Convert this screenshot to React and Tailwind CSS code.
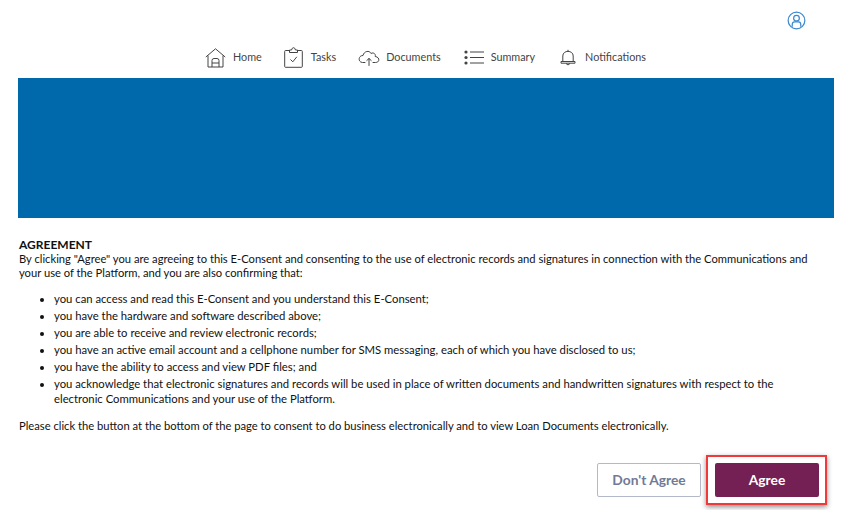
const bullets = [
  "you can access and read this E-Consent and you understand this E-Consent;",
  "you have the hardware and software described above;",
  "you are able to receive and review electronic records;",
  "you have an active email account and a cellphone number for SMS messaging, each of which you have disclosed to us;",
  "you have the ability to access and view PDF files; and",
  "you acknowledge that electronic signatures and records will be used in place of written documents and handwritten signatures with respect to the electronic Communications and your use of the Platform.",
];

function HomeIcon() {
  return (
    <svg width="21" height="20" viewBox="0 0 21 20" fill="none" stroke="#444" strokeWidth="1" strokeLinejoin="round">
      <path d="M0.8 9 L10.5 0.8 L20.2 9" />
      <path d="M3 7.5 V19 H18 V7.5" />
      <path d="M7 19 V12.5 Q7 10.5 9 10.5 H12 Q14 10.5 14 12.5 V19" />
      <path d="M7 15 H14" />
    </svg>
  );
}

function TasksIcon() {
  return (
    <svg width="19" height="21" viewBox="0 0 19 21" fill="none" stroke="#444" strokeWidth="1" strokeLinejoin="round">
      <path d="M5.5 3.5 H1.5 Q0.7 3.5 0.7 4.5 V19.5 Q0.7 20.3 1.5 20.3 H17.5 Q18.3 20.3 18.3 19.5 V4.5 Q18.3 3.5 17.5 3.5 H13.5" />
      <path d="M5.5 5.5 V3 H7.5 Q8 0.7 9.5 0.7 Q11 0.7 11.5 3 H13.5 V5.5 Z" />
      <path d="M6.5 12.5 L8.8 14.8 L12.8 9.8" />
    </svg>
  );
}

function CloudIcon() {
  return (
    <svg width="22" height="16" viewBox="0 0 22 16" fill="none" stroke="#444" strokeWidth="1" strokeLinecap="round" strokeLinejoin="round">
      <path d="M7 12.5 H4.5 C0 12.5 0 5.5 5 5.5 C6 1 11.5 0 13 3.5 C15.5 2 18 4 17.2 6.5 C22 7 22 12.5 17.5 12.5 H15" />
      <path d="M11 15.5 V8.5 M8.8 10.5 L11 8.5 L13.2 10.5" />
    </svg>
  );
}

function ListIcon() {
  return (
    <svg width="20" height="15" viewBox="0 0 20 15" fill="none" stroke="#444" strokeWidth="1.1">
      <circle cx="2" cy="2" r="1.6" fill="#444" stroke="none" />
      <circle cx="2" cy="7.5" r="1.6" fill="#444" stroke="none" />
      <circle cx="2" cy="13" r="1.6" fill="#444" stroke="none" />
      <path d="M6 2 H20 M6 7.5 H20 M6 13 H20" />
    </svg>
  );
}

function BellIcon() {
  return (
    <svg width="16" height="18" viewBox="0 0 16 18" fill="none" stroke="#444" strokeWidth="1" strokeLinejoin="round">
      <path d="M2.8 12.5 V7 C2.8 0.8 13.2 0.8 13.2 7 V12.5" />
      <path d="M8 2.5 V0.8" />
      <path d="M1 12.5 H15 V14.2 H1 Z" />
      <path d="M6 14.5 Q8 17.5 10 14.5" />
    </svg>
  );
}

function UserIcon() {
  return (
    <svg width="19" height="19" viewBox="0 0 20 20" fill="none" stroke="#3d8ad0" strokeWidth="1.3">
      <circle cx="10" cy="10" r="8.8" />
      <circle cx="10" cy="7.5" r="3" />
      <path d="M5.5 16.5 V14.5 Q5.5 11.5 8 11.5 H12 Q14.5 11.5 14.5 14.5 V16.5" />
    </svg>
  );
}

const navItems = [
  { label: "Home", icon: <HomeIcon />, cls: "gap-[7px] mr-[22px]" },
  { label: "Tasks", icon: <TasksIcon />, cls: "gap-[8px] mr-[22px]" },
  { label: "Documents", icon: <CloudIcon />, cls: "gap-[6px] mr-[23px]" },
  { label: "Summary", icon: <ListIcon />, cls: "gap-[7px] mr-[25px]" },
  { label: "Notifications", icon: <BellIcon />, cls: "gap-[9px]" },
];

export default function App() {
  return (
    <div className="w-[845px] h-[510px] overflow-hidden bg-white font-['Lato',sans-serif] text-[#111]">
      <div className="h-[41px] flex justify-end items-center pr-[39px]">
        <UserIcon />
      </div>
      <nav className="h-[37px] flex justify-center items-center pl-[6px] pb-[4px] text-[10.8px] text-[#444]">
        {navItems.map((item) => (
          <div key={item.label} className={`flex items-center ${item.cls}`}>
            {item.icon}
            <span>{item.label}</span>
          </div>
        ))}
      </nav>
      <div className="ml-[18px] mr-[11px] h-[140px] bg-[#0069ab]" />
      <section className="mt-[20px] ml-[19px] mr-[20px] text-[11.2px] leading-[14px]">
        <h2 className="font-bold text-[12px] leading-[14px]">AGREEMENT</h2>
        <p>
          By clicking "Agree" you are agreeing to this E-Consent and consenting to the use of electronic records and signatures in connection with the Communications and your use of the Platform, and you are also confirming that:
        </p>
        <ul className="mt-[11px] ml-[35px] mr-[20px] list-disc text-[11.3px] leading-[15px] space-y-[2px]">
          {bullets.map((b) => (
            <li key={b}>{b}</li>
          ))}
        </ul>
        <p className="mt-[13px]">
          Please click the button at the bottom of the page to consent to do business electronically and to view Loan Documents electronically.
        </p>
      </section>
      <div className="mt-[22px] mr-[18px] flex justify-end items-center gap-[5px]">
        <button className="w-[104px] h-[34px] border border-[#b4b9ca] rounded-[2px] bg-white text-[13.8px] font-bold text-[#717a94]">
          Don't Agree
        </button>
        <div className="border-2 border-[#f0393b] pl-[7px] pr-[6px] py-[6px] shadow-[0_2px_5px_rgba(0,0,0,0.45)]">
          <button className="block w-[104px] h-[34px] rounded-[2px] bg-[#742054] text-[13.8px] font-bold text-white">
            Agree
          </button>
        </div>
      </div>
    </div>
  );
}
